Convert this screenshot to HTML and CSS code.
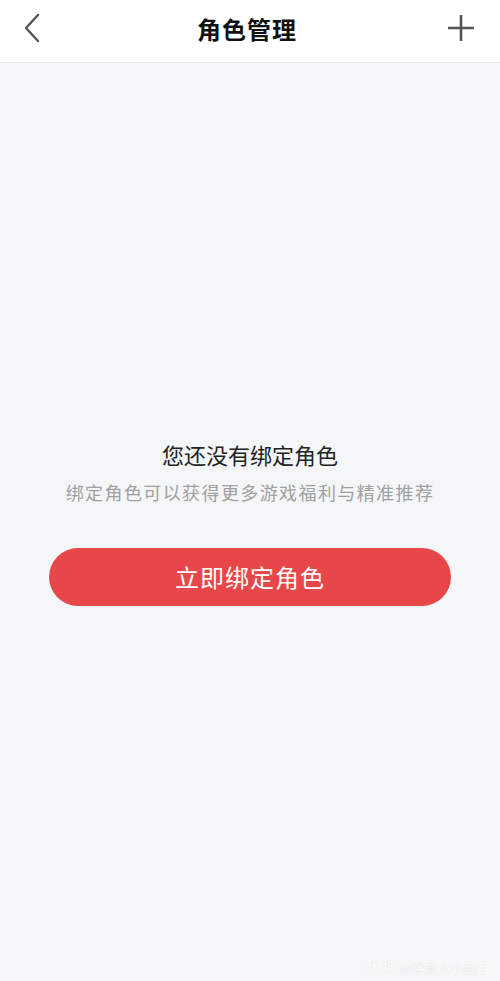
FILE: index.html
```html
<!DOCTYPE html>
<html lang="zh-CN">
<head>
    <meta charset="UTF-8">
    <meta name="viewport" content="width=device-width, initial-scale=1.0">
    <title>角色管理</title>
    <link rel="stylesheet" href="styles.css">
</head>
<body>
    <div class="page">
        <div class="navbar">
            <button class="nav-btn" aria-label="返回">
                <svg width="20" height="30" viewBox="0 0 20 30">
                    <path d="M15 2 L3 15 L15 28" fill="none" stroke="#555" stroke-width="2.4" stroke-linecap="round" stroke-linejoin="round"/>
                </svg>
            </button>
            <h1 class="nav-title">角色管理</h1>
            <button class="nav-btn" aria-label="添加">
                <svg width="28" height="28" viewBox="0 0 28 28">
                    <path d="M14 1 V27 M1 14 H27" fill="none" stroke="#555" stroke-width="2.6"/>
                </svg>
            </button>
        </div>

        <div class="content">
            <div class="empty">
                <p class="empty-title">您还没有绑定角色</p>
                <p class="empty-desc">绑定角色可以获得更多游戏福利与精准推荐</p>
                <button class="bind-btn">立即绑定角色</button>
            </div>
            <div class="watermark"><b>大神</b> @绘旅人小助手</div>
        </div>
    </div>
</body>
</html>
```

FILE: styles.css
```css
body {
    margin: 0;
    font-family: "Noto Sans CJK SC", "Noto Sans", sans-serif;
    background-color: #f5f6f8;
}
.page {
    display: flex;
    flex-direction: column;
    height: 981px;
}
.navbar {
    height: 56px;
    display: flex;
    align-items: center;
    justify-content: space-between;
    padding: 0 24px 6px 18px;
    background-color: #fff;
    border-bottom: 1px solid #e8e8ea;
}
.nav-btn {
    width: 30px;
    height: 30px;
    padding: 0;
    border: none;
    background: none;
    display: flex;
    align-items: center;
    justify-content: center;
}
.nav-title {
    margin: 0;
    font-size: 24px;
    font-weight: 700;
    color: #111;
    letter-spacing: 1px;
}
.content {
    flex: 1;
    display: flex;
    flex-direction: column;
    align-items: center;
    justify-content: space-between;
}
.empty {
    margin-top: 376px;
    display: flex;
    flex-direction: column;
    align-items: center;
    width: 402px;
}
.empty-title {
    margin: 0;
    font-size: 22px;
    color: #222;
    line-height: 30px;
}
.empty-desc {
    margin: 9px 0 0;
    font-size: 18px;
    color: #a0a0a0;
    line-height: 28px;
    letter-spacing: 1.4px;
}
.bind-btn {
    margin-top: 42px;
    width: 100%;
    height: 58px;
    border: none;
    border-radius: 29px;
    background-color: #e8474a;
    color: #fff;
    font-family: inherit;
    font-size: 24px;
    letter-spacing: 1px;
    padding-bottom: 3px;
}
.watermark {
    align-self: flex-end;
    margin: 0 10px 4px 0;
    font-size: 13px;
    color: rgba(255, 255, 255, 0.9);
    text-shadow: 0 0 1px rgba(0, 0, 0, 0.15);
}
.watermark b {
    font-size: 15px;
}
```
